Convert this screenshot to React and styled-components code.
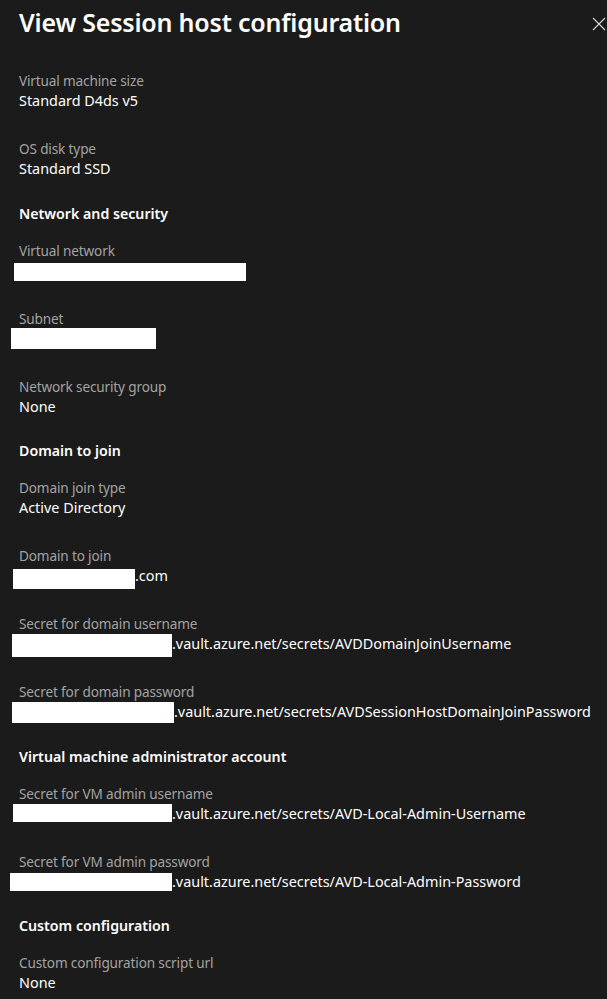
import React from "react";
import styled, { createGlobalStyle } from "styled-components";

const GlobalStyle = createGlobalStyle`
	html,
	body {
		margin: 0;
		padding: 0;
		background: #1b1b1b;
	}
	body {
		font-family: "Noto Sans", "Open Sans", sans-serif;
		color: #ffffff;
	}
`;

const Panel = styled.div`
	width: 607px;
	min-height: 999px;
	box-sizing: border-box;
	background: #1b1b1b;
	padding: 4px 1px 0 19px;
	display: flex;
	flex-direction: column;
`;

const Header = styled.div`
	display: flex;
	align-items: center;
	justify-content: space-between;
	height: 36px;
	margin-bottom: 31px;
`;

const Title = styled.h1`
	margin: 0;
	font-size: 25px;
	font-weight: 600;
	line-height: 36px;
	color: #ffffff;
	letter-spacing: -0.2px;
`;

const CloseButton = styled.button`
	background: none;
	border: 0;
	padding: 0;
	width: 14px;
	height: 14px;
	display: flex;
	cursor: pointer;
	margin-top: 3px;
`;

const Sections = styled.div`
	display: flex;
	flex-direction: column;
	gap: 24.5px;
`;

const Section = styled.section`
	display: flex;
	flex-direction: column;
`;

const Heading = styled.h2`
	margin: 0 0 17px;
	font-size: 14.2px;
	font-weight: 600;
	line-height: 20px;
	color: #ffffff;
`;

const Fields = styled.div`
	display: flex;
	flex-direction: column;
	gap: 28px;
`;

const Field = styled.div`
	display: flex;
	flex-direction: column;
`;

const Label = styled.div`
	font-size: 13.6px;
	line-height: 20px;
	letter-spacing: -0.15px;
	color: #a3a3a3;
	white-space: nowrap;
`;

const Value = styled.div`
	display: flex;
	align-items: center;
	height: 20px;
	font-size: 14.4px;
	line-height: 20px;
	color: #ffffff;
	white-space: nowrap;
`;

const Redacted = styled.span`
	flex: none;
	display: block;
	background: #ffffff;
	width: ${(p) => p.$w}px;
	height: ${(p) => p.$h}px;
	margin-left: ${(p) => p.$x}px;
	transform: translateY(${(p) => p.$dy || 0}px);
`;

const CloseIcon = () => (
	<svg width="14" height="14" viewBox="0 0 14 14">
		<path d="M1 1 L13 13 M13 1 L1 13" stroke="#d6d6d6" strokeWidth="1.1" fill="none" />
	</svg>
);

const sections = [
	{
		fields: [
			{ label: "Virtual machine size", value: "Standard D4ds v5" },
			{ label: "OS disk type", value: "Standard SSD" },
		],
	},
	{
		heading: "Network and security",
		fields: [
			{ label: "Virtual network", hide: { x: -5, w: 232, h: 18, dy: 1 } },
			{ label: "Subnet", hide: { x: -8, w: 145, h: 21, dy: 0 } },
			{ label: "Network security group", value: "None" },
		],
	},
	{
		heading: "Domain to join",
		fields: [
			{ label: "Domain join type", value: "Active Directory" },
			{ label: "Domain to join", value: ".com", hide: { x: -6, w: 122, h: 20, dy: 3 } },
			{
				label: "Secret for domain username",
				value: ".vault.azure.net/secrets/AVDDomainJoinUsername",
				hide: { x: -7, w: 160, h: 23, dy: 1 },
			},
			{
				label: "Secret for domain password",
				value: ".vault.azure.net/secrets/AVDSessionHostDomainJoinPassword",
				hide: { x: -7, w: 162, h: 21, dy: 0 },
			},
		],
	},
	{
		heading: "Virtual machine administrator account",
		fields: [
			{
				label: "Secret for VM admin username",
				value: ".vault.azure.net/secrets/AVD-Local-Admin-Username",
				hide: { x: -6, w: 159, h: 18, dy: -1 },
			},
			{
				label: "Secret for VM admin password",
				value: ".vault.azure.net/secrets/AVD-Local-Admin-Password",
				hide: { x: -9, w: 162, h: 18, dy: 0 },
			},
		],
	},
	{
		heading: "Custom configuration",
		fields: [{ label: "Custom configuration script url", value: "None" }],
	},
];

export default function App() {
	return (
		<>
			<GlobalStyle />
			<Panel>
				<Header>
					<Title>View Session host configuration</Title>
					<CloseButton aria-label="Close">
						<CloseIcon />
					</CloseButton>
				</Header>
				<Sections>
					{sections.map((s, i) => (
						<Section key={i}>
							{s.heading && <Heading>{s.heading}</Heading>}
							<Fields>
								{s.fields.map((f) => (
									<Field key={f.label}>
										<Label>{f.label}</Label>
										<Value>
											{f.hide && (
												<Redacted $x={f.hide.x} $w={f.hide.w} $h={f.hide.h} $dy={f.hide.dy} />
											)}
											{f.value}
										</Value>
									</Field>
								))}
							</Fields>
						</Section>
					))}
				</Sections>
			</Panel>
		</>
	);
}
